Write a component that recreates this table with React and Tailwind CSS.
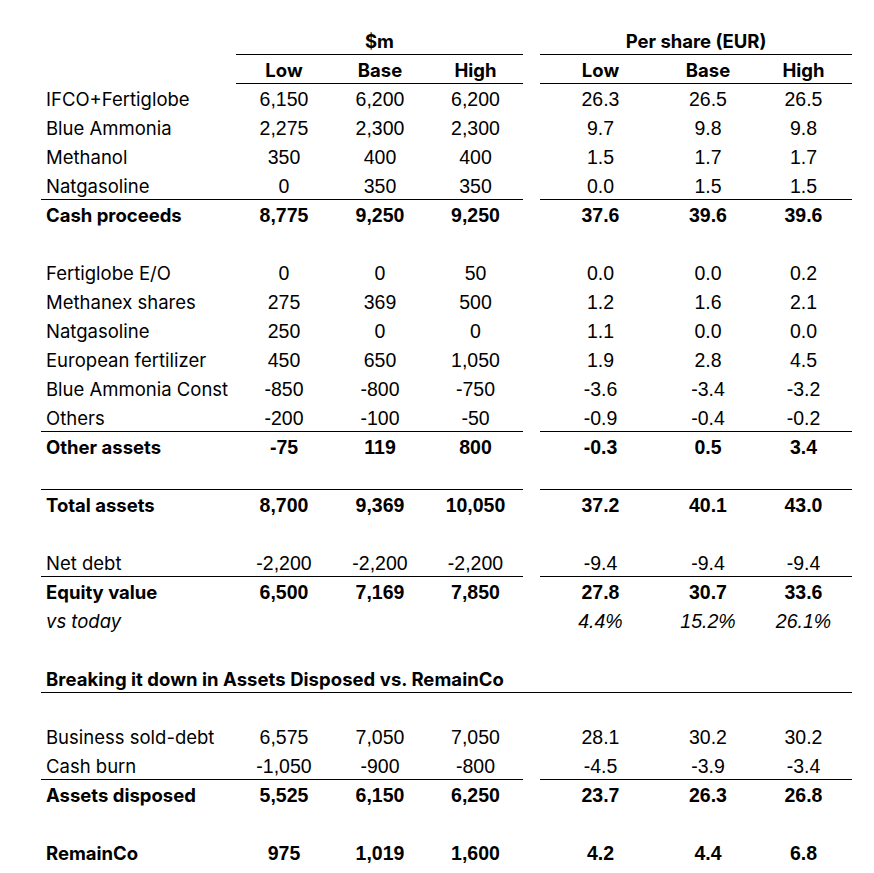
import React from 'react'

const rows = [
  { type: 'data', label: 'IFCO+Fertiglobe', usd: ['6,150', '6,200', '6,200'], eur: ['26.3', '26.5', '26.5'] },
  { type: 'data', label: 'Blue Ammonia', usd: ['2,275', '2,300', '2,300'], eur: ['9.7', '9.8', '9.8'] },
  { type: 'data', label: 'Methanol', usd: ['350', '400', '400'], eur: ['1.5', '1.7', '1.7'] },
  { type: 'data', label: 'Natgasoline', usd: ['0', '350', '350'], eur: ['0.0', '1.5', '1.5'], line: true },
  { type: 'data', label: 'Cash proceeds', usd: ['8,775', '9,250', '9,250'], eur: ['37.6', '39.6', '39.6'], bold: true },
  { type: 'blank' },
  { type: 'data', label: 'Fertiglobe E/O', usd: ['0', '0', '50'], eur: ['0.0', '0.0', '0.2'] },
  { type: 'data', label: 'Methanex shares', usd: ['275', '369', '500'], eur: ['1.2', '1.6', '2.1'] },
  { type: 'data', label: 'Natgasoline', usd: ['250', '0', '0'], eur: ['1.1', '0.0', '0.0'] },
  { type: 'data', label: 'European fertilizer', usd: ['450', '650', '1,050'], eur: ['1.9', '2.8', '4.5'] },
  { type: 'data', label: 'Blue Ammonia Const', usd: ['-850', '-800', '-750'], eur: ['-3.6', '-3.4', '-3.2'] },
  { type: 'data', label: 'Others', usd: ['-200', '-100', '-50'], eur: ['-0.9', '-0.4', '-0.2'], line: true },
  { type: 'data', label: 'Other assets', usd: ['-75', '119', '800'], eur: ['-0.3', '0.5', '3.4'], bold: true },
  { type: 'blank', line: true },
  { type: 'data', label: 'Total assets', usd: ['8,700', '9,369', '10,050'], eur: ['37.2', '40.1', '43.0'], bold: true },
  { type: 'blank' },
  { type: 'data', label: 'Net debt', usd: ['-2,200', '-2,200', '-2,200'], eur: ['-9.4', '-9.4', '-9.4'], line: true },
  { type: 'data', label: 'Equity value', usd: ['6,500', '7,169', '7,850'], eur: ['27.8', '30.7', '33.6'], bold: true },
  { type: 'data', label: 'vs today', usd: ['', '', ''], eur: ['4.4%', '15.2%', '26.1%'], italic: true },
  { type: 'blank' },
  { type: 'title', label: 'Breaking it down in Assets Disposed vs. RemainCo' },
  { type: 'blank' },
  { type: 'data', label: 'Business sold-debt', usd: ['6,575', '7,050', '7,050'], eur: ['28.1', '30.2', '30.2'] },
  { type: 'data', label: 'Cash burn', usd: ['-1,050', '-900', '-800'], eur: ['-4.5', '-3.9', '-3.4'], line: true },
  { type: 'data', label: 'Assets disposed', usd: ['5,525', '6,150', '6,250'], eur: ['23.7', '26.3', '26.8'], bold: true },
  { type: 'blank' },
  { type: 'data', label: 'RemainCo', usd: ['975', '1,019', '1,600'], eur: ['4.2', '4.4', '6.8'], bold: true },
]

const label = "font-['Inter',sans-serif] text-[18.5px]"
const num = "font-['Liberation_Sans',Arial,sans-serif] text-[19.5px]"
const usdCols = ['w-[96px]', 'w-[96px]', 'w-[95px]']
const eurCols = ['w-[121px]', 'w-[94px]', 'w-[97px]']

function Cell({ w, children, className }) {
  return <div className={`${w} flex justify-center whitespace-nowrap ${className}`}>{children}</div>
}

function Row({ r }) {
  if (r.type === 'title') {
    return (
      <div className="h-[29px] w-[811px] flex items-center pt-[3px] border-b border-black">
        <span className={`${label} font-bold pl-[5px] tracking-[0.05px]`}>{r.label}</span>
      </div>
    )
  }
  const line = r.line ? 'border-b border-black' : ''
  const weight = r.bold ? 'font-bold' : ''
  const ital = r.italic ? 'italic' : ''
  return (
    <div className="h-[29px] flex">
      <div className={`w-[482px] flex items-center pt-[3px] ${line}`}>
        <div className={`w-[195px] pl-[5px] whitespace-nowrap ${label} ${weight} ${ital}`}>{r.label}</div>
        {r.usd && r.usd.map((v, i) => (
          <Cell key={i} w={usdCols[i]} className={`${num} ${weight} ${ital}`}>{v}</Cell>
        ))}
      </div>
      <div className={`ml-[17px] w-[312px] flex items-center pt-[3px] ${line}`}>
        {r.eur && r.eur.map((v, i) => (
          <Cell key={i} w={eurCols[i]} className={`${num} ${weight} ${ital}`}>{v}</Cell>
        ))}
      </div>
    </div>
  )
}

export default function App() {
  return (
    <div className="w-[874px] h-[873px] bg-white text-black pt-[26px] pl-[41px]">
      <div className="h-[29px] flex">
        <div className="w-[195px]" />
        <div className={`w-[287px] flex items-center justify-center pt-[3px] border-b border-black ${label} font-bold`}>$m</div>
        <div className={`ml-[17px] w-[312px] flex items-center justify-center pt-[3px] border-b border-black ${label} font-bold`}>Per share (EUR)</div>
      </div>
      <div className="h-[29px] flex">
        <div className="w-[195px]" />
        <div className="w-[287px] flex items-center pt-[3px] border-b border-black">
          {['Low', 'Base', 'High'].map((h, i) => (
            <Cell key={h} w={usdCols[i]} className={`${label} font-bold`}>{h}</Cell>
          ))}
        </div>
        <div className="ml-[17px] w-[312px] flex items-center pt-[3px] border-b border-black">
          {['Low', 'Base', 'High'].map((h, i) => (
            <Cell key={h} w={eurCols[i]} className={`${label} font-bold`}>{h}</Cell>
          ))}
        </div>
      </div>
      {rows.map((r, i) => <Row key={i} r={r} />)}
    </div>
  )
}
